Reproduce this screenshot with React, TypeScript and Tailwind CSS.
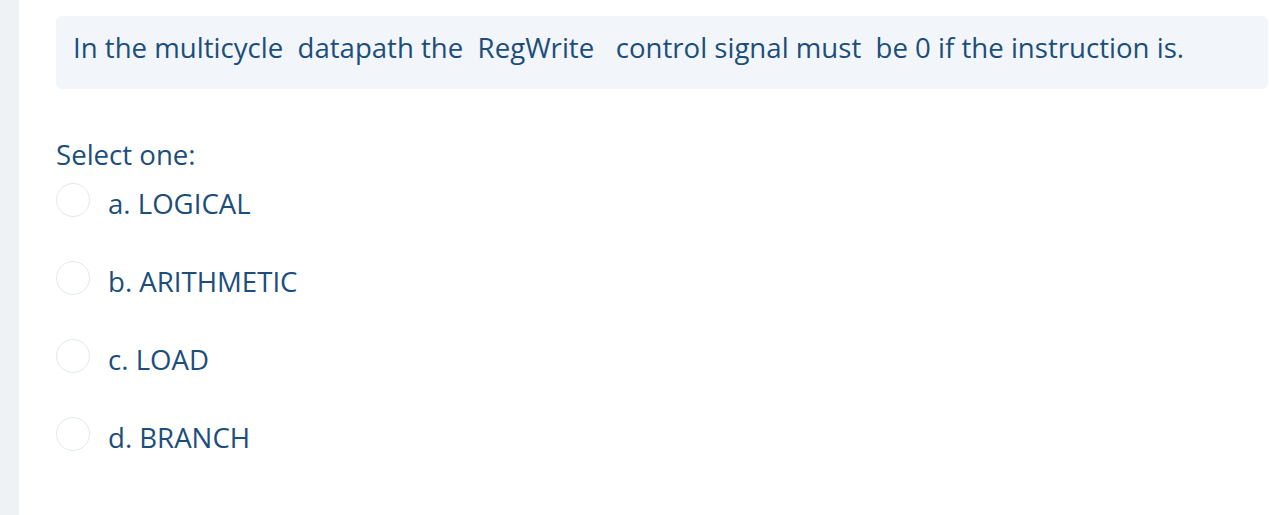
export default function App() {
  const opts = ["a. LOGICAL", "b. ARITHMETIC", "c. LOAD", "d. BRANCH"];
  return (
    <div className="flex h-[515px] w-[1269px] bg-white text-[#1c4e7c]" style={{ fontFamily: '"Open Sans", sans-serif' }}>
      <div className="w-[19px] shrink-0 bg-[#eef2f4]" />
      <div className="flex-1 pl-[37px] pr-[1px] pt-[16px]">
        <div className="flex h-[73px] items-center rounded-[6px] bg-[#f2f6fa] pb-[10px] pl-[17px]">
          <p className="whitespace-pre text-[27.6px] leading-none">In the multicycle  datapath the  RegWrite   control signal must  be 0 if the instruction is.</p>
        </div>
        <div className="mt-[52px] text-[27.6px] leading-none">Select one:</div>
        <div className="mt-[14px] flex flex-col gap-[44px]">
          {opts.map((o) => (
            <div key={o} className="flex h-[34px] items-center gap-[18px]">
              <span className="h-[34px] w-[34px] shrink-0 rounded-full border border-[#e2e9eb] bg-white" />
              <span className="pt-[8px] text-[27.6px] leading-none">{o}</span>
            </div>
          ))}
        </div>
      </div>
    </div>
  );
}
